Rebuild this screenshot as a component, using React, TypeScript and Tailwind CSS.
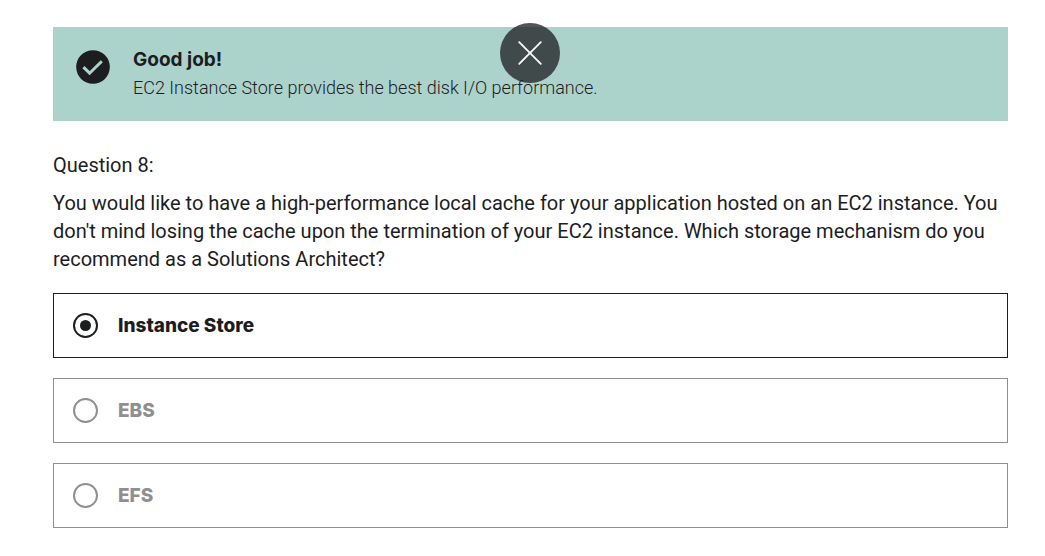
import { useState } from "react";

const options = ["Instance Store", "EBS", "EFS"];

export default function App() {
  const [selected, setSelected] = useState("Instance Store");

  return (
    <main className="bg-white pt-[27px] pr-[37px] pb-7 pl-[53px] font-['Inter','Liberation_Sans',sans-serif] text-[#1c1d1f]">
      <section className="relative flex h-[94px] items-start bg-[#acd2cc] pt-[19px] pr-6 pl-[23px]">
        <svg
          className="mt-1 mr-[23px] size-[34px] shrink-0"
          viewBox="0 0 34 34"
          aria-hidden="true"
        >
          <circle cx="17" cy="17" r="16.8" fill="#1c1d1f" />
          <path
            d="M7.4 17.2 L13.6 23.2 L25.8 11.2"
            fill="none"
            stroke="#acd2cc"
            strokeWidth="3"
          />
        </svg>
        <div>
          <h2 className="text-[19px] leading-7 font-bold">Good job!</h2>
          <p className="font-['Roboto','Liberation_Sans',sans-serif] text-[18px] leading-7 font-light">
            EC2 Instance Store provides the best disk I/O performance.
          </p>
        </div>
        <div className="absolute inset-x-0 -top-1 flex justify-center pr-px">
          <button
            type="button"
            aria-label="Close"
            className="flex size-[60px] items-center justify-center rounded-full bg-[#202124]/77 text-white"
          >
            <svg className="size-6" viewBox="0 0 24 24" aria-hidden="true">
              <path
                d="M1.2 1.2 L22.8 22.8 M22.8 1.2 L1.2 22.8"
                stroke="currentColor"
                strokeWidth="1.8"
                strokeLinecap="round"
              />
            </svg>
          </button>
        </div>
      </section>

      <form className="font-['Roboto','Liberation_Sans',sans-serif]">
        <p className="mt-[30px] text-[20px] leading-7">Question 8:</p>
        <p id="question" className="mt-[10px] text-[20px] leading-7">
          You would like to have a high-performance local cache for your application hosted on an EC2
          instance. You don't mind losing the cache upon the termination of your EC2 instance. Which
          storage mechanism do you recommend as a Solutions Architect?
        </p>

        <div role="radiogroup" aria-labelledby="question" className="mt-5 flex flex-col gap-5">
          {options.map((option) => (
            <label
              key={option}
              className="flex h-[65px] cursor-pointer items-center gap-5 border border-[#8f8f8f] px-[19px] font-['Inter','Liberation_Sans',sans-serif] text-[19px] leading-7 font-extrabold text-[#8f8f8f] has-checked:border-[#1c1d1f] has-checked:text-[#1c1d1f]"
            >
              <input
                type="radio"
                name="answer"
                value={option}
                checked={selected === option}
                onChange={() => setSelected(option)}
                className="grid size-[25px] shrink-0 appearance-none place-items-center rounded-full border-2 border-current before:size-[11px] before:rounded-full checked:before:bg-current"
              />
              <span>{option}</span>
            </label>
          ))}
        </div>
      </form>
    </main>
  );
}
